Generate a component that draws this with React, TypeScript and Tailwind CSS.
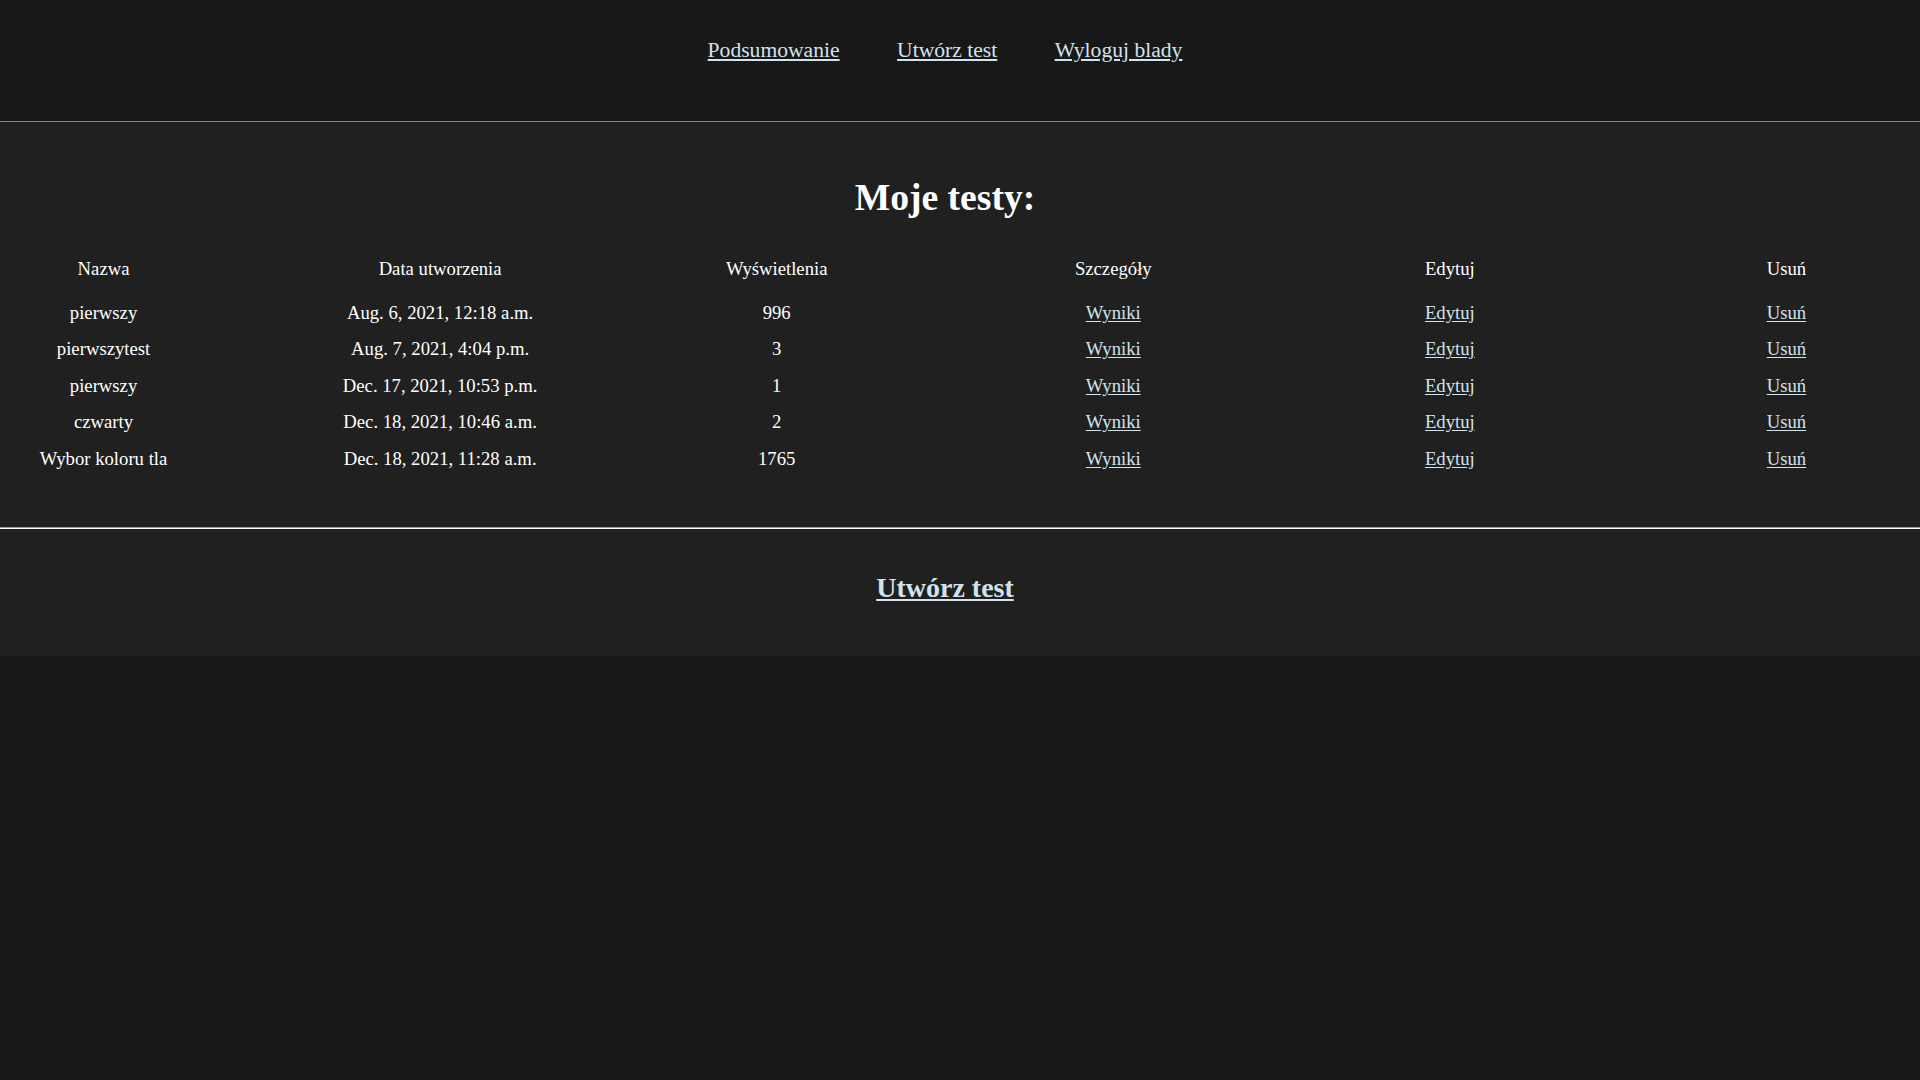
import React from 'react';

interface TestRow {
  name: string;
  created: string;
  views: number;
}

const tests: TestRow[] = [
  { name: 'pierwszy', created: 'Aug. 6, 2021, 12:18 a.m.', views: 996 },
  { name: 'pierwszytest', created: 'Aug. 7, 2021, 4:04 p.m.', views: 3 },
  { name: 'pierwszy', created: 'Dec. 17, 2021, 10:53 p.m.', views: 1 },
  { name: 'czwarty', created: 'Dec. 18, 2021, 10:46 a.m.', views: 2 },
  { name: 'Wybor koloru tla', created: 'Dec. 18, 2021, 11:28 a.m.', views: 1765 },
];

const headers = ['Nazwa', 'Data utworzenia', 'Wyświetlenia', 'Szczegóły', 'Edytuj', 'Usuń'];

const linkCls = 'text-[#d2e3ec] underline underline-offset-[2px]';

const App: React.FC = () => {
  return (
    <div className="min-h-screen bg-[#181818] text-white font-['Liberation_Serif','Times_New_Roman',serif]">
      <header className="h-[122px] border-b border-[#2eb872] pt-[38px]">
        <nav className="flex justify-center gap-[57.5px] pr-[30px] text-[21.6px] leading-[24px]">
          <a href="#" className={linkCls}>Podsumowanie</a>
          <a href="#" className={linkCls}>Utwórz test</a>
          <a href="#" className={linkCls}>Wyloguj blady</a>
        </nav>
      </header>

      <section className="bg-[#202020] pt-[56px] pb-[52px]">
        <div className="pr-[30px]">
          <h1 className="text-center text-[37.6px] leading-[40px] font-bold">Moje testy:</h1>

          <div className="mt-[33px] grid grid-cols-6 gap-x-[129.5px] text-center text-[18.7px] leading-[36.4px]">
            {headers.map(h => (
              <div key={h}>{h}</div>
            ))}
          </div>

          <div className="mt-[7.6px] text-[18.7px] leading-[36.4px]">
            {tests.map((t, idx) => (
              <div key={idx} className="grid grid-cols-6 gap-x-[129.5px] text-center">
                <div>{t.name}</div>
                <div>{t.created}</div>
                <div>{t.views}</div>
                <div><a href="#" className={linkCls}>Wyniki</a></div>
                <div><a href="#" className={linkCls}>Edytuj</a></div>
                <div><a href="#" className={linkCls}>Usuń</a></div>
              </div>
            ))}
          </div>
        </div>

        <hr className="mt-[50px] border-0 border-t border-t-[#9a9a9a] border-b border-b-white" />

        <div className="pr-[30px] pt-[43px] text-center text-[28px] leading-[32px] font-bold">
          <a href="#" className={linkCls}>Utwórz test</a>
        </div>
      </section>
    </div>
  );
};

export default App;
